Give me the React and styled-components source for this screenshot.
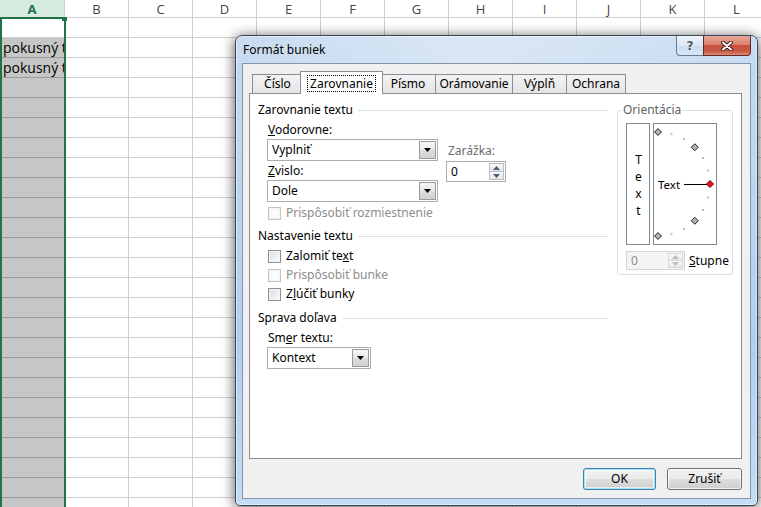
import React from "react"
import styled, { createGlobalStyle, css } from "styled-components"

const GlobalStyle = createGlobalStyle`
  html, body {
    margin: 0;
    padding: 0;
    background: #fff;
    overflow: hidden;
  }
  body {
    font-family: "Noto Sans", "Open Sans", sans-serif;
  }
`

const COLUMNS = ["A", "B", "C", "D", "E", "F", "G", "H", "I", "J", "K", "L"]
const ROW_COUNT = 25
const CELL_TEXT = { 2: "pokusný t", 3: "pokusný t" }

const TABS = [
  { label: "Číslo", w: 51 },
  { label: "Zarovnanie", w: 79, active: true },
  { label: "Písmo", w: 56 },
  { label: "Orámovanie", w: 78 },
  { label: "Výplň", w: 55 },
  { label: "Ochrana", w: 60 },
]

const DIAL_CENTER = { x: 4, y: 60 }
const DIAL_RADIUS = 52

export default function App() {
  return (
    <>
      <GlobalStyle />
      <Screen>
        <Sheet>
          {COLUMNS.map((c, i) => (
            <HeaderCell key={c} $active={i === 0}>
              {c}
            </HeaderCell>
          ))}
          {Array.from({ length: ROW_COUNT }, (_, r) =>
            COLUMNS.map((c, i) => (
              <Cell key={c + r} $selected={i === 0 && r > 0}>
                {i === 0 ? CELL_TEXT[r + 1] : null}
              </Cell>
            ))
          )}
        </Sheet>
        <SelectionFrame />
        <FillHandle />

        <Dialog>
          <TitleBar>
            <Title>Formát buniek</Title>
            <CaptionButtons>
              <HelpButton>?</HelpButton>
              <CloseButton>
                <svg width="12" height="10" viewBox="0 0 12 10">
                  <path d="M2 1.5l8 7M10 1.5l-8 7" stroke="#3a2020" strokeWidth="4" strokeLinecap="round" />
                  <path d="M2 1.5l8 7M10 1.5l-8 7" stroke="#fff" strokeWidth="2" strokeLinecap="round" />
                </svg>
              </CloseButton>
            </CaptionButtons>
          </TitleBar>

          <Client>
            <TabStrip>
              {TABS.map((t) => (
                <Tab key={t.label} $w={t.w} $active={t.active}>
                  {t.active ? <FocusRect>{t.label}</FocusRect> : t.label}
                </Tab>
              ))}
            </TabStrip>

            <Panel>
              <LeftColumn>
                <GroupHeading>Zarovnanie textu</GroupHeading>
                <AlignBlock>
                  <Stack $w={171}>
                    <FieldLabel>
                      <u>V</u>odorovne:
                    </FieldLabel>
                    <Select $w={171} $mt={1}>
                      <SelectValue>Vyplniť</SelectValue>
                      <DropButton>
                        <Arrow />
                      </DropButton>
                    </Select>
                    <FieldLabel $mt={2}>
                      <u>Z</u>vislo:
                    </FieldLabel>
                    <Select $w={171} $mt={1}>
                      <SelectValue>Dole</SelectValue>
                      <DropButton>
                        <Arrow />
                      </DropButton>
                    </Select>
                  </Stack>
                  <IndentStack>
                    <FieldLabel $disabled>Zarážka:</FieldLabel>
                    <Spin $w={60} $h={21} $mt={2} value="0" />
                  </IndentStack>
                </AlignBlock>
                <CheckRow $mt={3} $disabled>
                  <CheckBox $disabled />
                  Prispôsobiť rozmiestnenie
                </CheckRow>

                <GroupHeading $mt={7}>Nastavenie textu</GroupHeading>
                <CheckRow $mt={4}>
                  <CheckBox />
                  <span>
                    Zalomiť te<u>x</u>t
                  </span>
                </CheckRow>
                <CheckRow $mt={3} $disabled>
                  <CheckBox $disabled />
                  Prispôsobiť bunke
                </CheckRow>
                <CheckRow $mt={3}>
                  <CheckBox />
                  <span>
                    Z<u>l</u>účiť bunky
                  </span>
                </CheckRow>

                <GroupHeading $mt={8}>Sprava doľava</GroupHeading>
                <FieldLabel $mt={4} $indent>
                  Sm<u>e</u>r textu:
                </FieldLabel>
                <Select $w={104} $mt={1} $indent>
                  <SelectValue>Kontext</SelectValue>
                  <DropButton>
                    <Arrow />
                  </DropButton>
                </Select>
              </LeftColumn>

              <OrientGroup>
                <Legend>Orientácia</Legend>
                <OrientRow>
                  <VerticalBox>
                    <VerticalText>Text</VerticalText>
                  </VerticalBox>
                  <DialBox>
                    <Dial />
                  </DialBox>
                </OrientRow>
                <DegreeRow>
                  <Spin $w={59} $h={19} value="0" disabled />
                  <span>
                    <u>S</u>tupne
                  </span>
                </DegreeRow>
              </OrientGroup>
            </Panel>

            <ButtonRow>
              <PushButton $w={73} $default>
                OK
              </PushButton>
              <PushButton $w={75}>Zrušiť</PushButton>
            </ButtonRow>
          </Client>
        </Dialog>
      </Screen>
    </>
  )
}

const Arrow = () => (
  <svg width="7" height="4" viewBox="0 0 7 4">
    <path d="M0 0h7L3.5 4z" fill="#000" />
  </svg>
)

const Spin = ({ $w, $h, $mt, value, disabled }) => (
  <SpinBox $w={$w} $h={$h} $mt={$mt} $disabled={disabled}>
    <SpinValue $disabled={disabled}>{value}</SpinValue>
    <SpinButtons>
      <SpinHalf $disabled={disabled}>
        <svg width="7" height="4" viewBox="0 0 7 4">
          <path d="M0 4L3.5 0L7 4z" fill={disabled ? "#b8bcc4" : "#4d5d7a"} />
        </svg>
      </SpinHalf>
      <SpinHalf $disabled={disabled}>
        <svg width="7" height="4" viewBox="0 0 7 4">
          <path d="M0 0h7L3.5 4z" fill={disabled ? "#b8bcc4" : "#4d5d7a"} />
        </svg>
      </SpinHalf>
    </SpinButtons>
  </SpinBox>
)

const Diamond = ({ x, y, red }) => (
  <path
    d={`M${x} ${y - 3.5}L${x + 3.5} ${y}L${x} ${y + 3.5}L${x - 3.5} ${y}Z`}
    fill={red ? "#e8101c" : "#b4b4b4"}
    stroke={red ? "#6a0000" : "#222"}
    strokeWidth="1"
  />
)

const Dial = () => {
  const marks = []
  for (let a = 90; a >= -90; a -= 15) {
    const rad = (a * Math.PI) / 180
    const x = DIAL_CENTER.x + DIAL_RADIUS * Math.cos(rad)
    const y = DIAL_CENTER.y - DIAL_RADIUS * Math.sin(rad)
    if (a % 45 === 0) marks.push(<Diamond key={a} x={x} y={y} red={a === 0} />)
    else marks.push(<rect key={a} x={x - 1} y={y - 1} width="2" height="2" fill="#bdbdbd" />)
  }
  return (
    <svg width="62" height="120" viewBox="0 0 62 120">
      {marks}
      <text x="4" y="64.5" fontSize="11.5" fontFamily="Noto Sans, Open Sans, sans-serif" fill="#000">
        Text
      </text>
      <line x1="30" y1="60.5" x2="53" y2="60.5" stroke="#000" strokeWidth="1" />
    </svg>
  )
}

/* ---------- sheet ---------- */

const Screen = styled.div`
  position: relative;
  width: 761px;
  height: 507px;
  overflow: hidden;
  background: #fff;
`

const Sheet = styled.div`
  display: grid;
  grid-template-columns: 64px repeat(11, 63px);
  grid-template-rows: 17px;
  grid-auto-rows: 19px;
  gap: 1px;
  width: 769px;
  background-color: #cfcfcf;
`

const HeaderCell = styled.div`
  display: flex;
  align-items: center;
  justify-content: center;
  font: 13px "Open Sans", sans-serif;
  color: #444;
  background: #fff;

  ${(p) =>
    p.$active &&
    css`
      background: #d6ece0;
      color: #217346;
      font-weight: 700;
    `}
`

const Cell = styled.div`
  background: ${(p) => (p.$selected ? "#c6c6c6" : "#fff")};
  box-shadow: ${(p) => (p.$selected ? "0 1px 0 #9b9b9b" : "none")};
  padding-left: 3px;
  font: 14px/19px "Open Sans", sans-serif;
  color: #000;
  white-space: nowrap;
  overflow: hidden;
`

const SelectionFrame = styled.div`
  position: absolute;
  left: 0;
  top: 17px;
  width: 66px;
  height: 500px;
  box-sizing: border-box;
  border: 2px solid #217346;
  pointer-events: none;
`

const FillHandle = styled.div`
  position: absolute;
  left: 62px;
  top: 17px;
  width: 5px;
  height: 4px;
  background: #217346;
`

/* ---------- dialog frame ---------- */

const Dialog = styled.div`
  position: absolute;
  left: 235px;
  top: 35px;
  width: 523px;
  height: 471px;
  box-sizing: border-box;
  display: flex;
  flex-direction: column;
  padding: 0 6px 6px;
  border: 1px solid #3a4756;
  border-radius: 7px 7px 5px 5px;
  background: linear-gradient(180deg, #c6daf0 0%, #bcd5f0 35%, #aecff3 65%, #c4dcf4 100%);
  box-shadow: inset 0 0 0 1px rgba(255, 255, 255, 0.45), 0 2px 14px rgba(0, 0, 0, 0.7);
  font: 12px/16px "Noto Sans", "Open Sans", sans-serif;
  color: #000;
`

const TitleBar = styled.div`
  height: 27px;
  display: flex;
  align-items: flex-start;
  margin: 0 -6px;
  padding: 0 6px 0 7px;
  border-radius: 6px 6px 0 0;
  background: linear-gradient(
    90deg,
    rgba(255, 255, 255, 0.05) 0%,
    rgba(255, 255, 255, 0.35) 45%,
    rgba(255, 255, 255, 0.25) 70%,
    rgba(255, 255, 255, 0.05) 100%
  );
`

const Title = styled.div`
  flex: 1;
  padding-top: 6px;
`

const CaptionButtons = styled.div`
  display: flex;
  height: 20px;
`

const HelpButton = styled.div`
  width: 27px;
  box-sizing: border-box;
  border: 1px solid #6c7c8e;
  border-top: none;
  border-right: none;
  border-radius: 0 0 0 4px;
  background: linear-gradient(180deg, #eef4fa 0%, #dbe7f3 50%, #c8dbee 51%, #d6e6f5 100%);
  display: flex;
  align-items: center;
  justify-content: center;
  font: bold 12px "DejaVu Sans", sans-serif;
  color: #4a5666;
  text-shadow: 0 0 2px #fff;
`

const CloseButton = styled.div`
  width: 48px;
  box-sizing: border-box;
  border: 1px solid #5e2a2a;
  border-top: none;
  border-radius: 0 0 4px 0;
  background: linear-gradient(180deg, #e6a798 0%, #d9826f 45%, #c7503e 50%, #c95a45 80%, #dd8a70 100%);
  display: flex;
  align-items: center;
  justify-content: center;
`

const Client = styled.div`
  flex: 1;
  display: flex;
  flex-direction: column;
  border: 1px solid #8595a9;
  background: #f0f0f0;
  padding: 7px 8px 8px 6px;
`

/* ---------- tabs ---------- */

const TabStrip = styled.div`
  display: flex;
  align-items: flex-end;
  height: 23px;
  padding-left: 3px;
  margin-bottom: -1px;
  position: relative;
  z-index: 1;
`

const Tab = styled.div`
  box-sizing: border-box;
  width: ${(p) => p.$w}px;
  height: 19px;
  margin: 0 0 1px -1px;
  border: 1px solid #898c95;
  border-bottom: none;
  background: linear-gradient(180deg, #f3f3f3, #e5e5e5);
  display: flex;
  align-items: center;
  justify-content: center;

  &:first-child {
    margin-left: 0;
  }

  ${(p) =>
    p.$active &&
    css`
      width: ${p.$w + 4}px;
      height: 23px;
      margin: 0 -2px 0 -3px;
      background: #fff;
      position: relative;
      z-index: 1;
    `}
`

const FocusRect = styled.span`
  outline: 1px dotted #000;
  padding: 0 2px;
  line-height: 15px;
`

const Panel = styled.div`
  flex: 1;
  display: flex;
  gap: 9px;
  padding: 8px 8px 0;
  background: #fff;
  border: 1px solid #898c95;
`

const ButtonRow = styled.div`
  display: flex;
  justify-content: flex-end;
  gap: 11px;
  margin-top: 9px;
`

const PushButton = styled.div`
  box-sizing: border-box;
  width: ${(p) => p.$w}px;
  height: 22px;
  border: 1px solid #707070;
  border-radius: 3px;
  background: linear-gradient(180deg, #f2f2f2 0%, #ebebeb 50%, #dddddd 51%, #cfcfcf 100%);
  box-shadow: inset 0 0 0 1px rgba(255, 255, 255, 0.7);
  display: flex;
  align-items: center;
  justify-content: center;

  ${(p) =>
    p.$default &&
    css`
      border-color: #3c7fb1;
      box-shadow: inset 0 0 0 1px #a5e4fb, inset 0 0 0 2px rgba(255, 255, 255, 0.6);
    `}
`

/* ---------- left column ---------- */

const LeftColumn = styled.div`
  width: 350px;
  display: flex;
  flex-direction: column;
`

const GroupHeading = styled.div`
  display: flex;
  align-items: center;
  gap: 5px;
  white-space: nowrap;
  margin-top: ${(p) => p.$mt || 0}px;

  &::after {
    content: "";
    flex: 1;
    height: 1px;
    background: #dce2e8;
  }
`

const AlignBlock = styled.div`
  display: flex;
  gap: 8px;
  margin-top: 4px;
  padding-left: 9px;
`

const Stack = styled.div`
  display: flex;
  flex-direction: column;
  width: ${(p) => p.$w}px;
`

const IndentStack = styled.div`
  display: flex;
  flex-direction: column;
  padding-top: 21px;
`

const FieldLabel = styled.div`
  margin-top: ${(p) => p.$mt || 0}px;
  padding-left: ${(p) => (p.$indent ? 10 : p.$disabled ? 2 : 1)}px;
  color: ${(p) => (p.$disabled ? "#6d6d6d" : "#000")};
`

const Select = styled.div`
  box-sizing: border-box;
  width: ${(p) => p.$w}px;
  height: 22px;
  margin-top: ${(p) => p.$mt || 0}px;
  margin-left: ${(p) => (p.$indent ? 9 : 0)}px;
  padding: 1px 1px 1px 4px;
  border: 1px solid #abadb3;
  background: #fff;
  display: flex;
  align-items: center;
`

const SelectValue = styled.span`
  flex: 1;
`

const DropButton = styled.span`
  align-self: stretch;
  width: 17px;
  box-sizing: border-box;
  border: 1px solid #9a9a9a;
  background: linear-gradient(180deg, #f6f6f6 0%, #e8e8e8 50%, #dcdcdc 51%, #d2d2d2 100%);
  display: flex;
  align-items: center;
  justify-content: center;
`

const SpinBox = styled.div`
  box-sizing: border-box;
  width: ${(p) => p.$w}px;
  height: ${(p) => p.$h}px;
  margin-top: ${(p) => p.$mt || 0}px;
  padding: 1px;
  border: 1px solid ${(p) => (p.$disabled ? "#d5d5d5" : "#abadb3")};
  background: ${(p) => (p.$disabled ? "#f4f4f4" : "#fff")};
  display: flex;
`

const SpinValue = styled.span`
  flex: 1;
  padding-left: 3px;
  display: flex;
  align-items: center;
  color: ${(p) => (p.$disabled ? "#8d8d8d" : "#000")};
`

const SpinButtons = styled.span`
  width: 15px;
  display: flex;
  flex-direction: column;
`

const SpinHalf = styled.span`
  flex: 1;
  box-sizing: border-box;
  border: 1px solid ${(p) => (p.$disabled ? "#dadada" : "#b9bcc2")};
  background: linear-gradient(180deg, #fafafa, #e6e6e6);
  display: flex;
  align-items: center;
  justify-content: center;

  & + & {
    border-top: none;
  }
`

const CheckRow = styled.div`
  display: flex;
  align-items: center;
  gap: 5px;
  height: 16px;
  margin-top: ${(p) => p.$mt || 0}px;
  padding-left: 10px;
  color: ${(p) => (p.$disabled ? "#8d8d8d" : "#000")};
`

const CheckBox = styled.span`
  width: 13px;
  height: 13px;
  box-sizing: border-box;
  border: 1px solid ${(p) => (p.$disabled ? "#c4c4c4" : "#8e8f8f")};
  background: ${(p) =>
    p.$disabled ? "#fbfbfb" : "linear-gradient(135deg, #dcdcdc 0%, #f0f0f0 60%, #fdfdfd 100%)"};
  box-shadow: inset 0 0 0 1px #f4f4f4;
`

/* ---------- orientation ---------- */

const OrientGroup = styled.fieldset`
  align-self: flex-start;
  box-sizing: border-box;
  width: 116px;
  min-width: 0;
  margin: 0;
  padding: 5px 0 4px 8px;
  border: 1px solid #d5dfe5;
  border-radius: 3px;
`

const Legend = styled.legend`
  margin-left: -4px;
  padding: 0 1px;
  color: #5f5f5f;
  line-height: 16px;
`

const OrientRow = styled.div`
  display: flex;
  gap: 3px;
`

const VerticalBox = styled.div`
  box-sizing: border-box;
  width: 24px;
  height: 122px;
  border: 1px solid #828790;
  display: flex;
  align-items: center;
  justify-content: center;
  padding-top: 2px;
`

const VerticalText = styled.span`
  writing-mode: vertical-lr;
  text-orientation: upright;
  font-size: 12px;
  line-height: 16px;
`

const DialBox = styled.div`
  box-sizing: border-box;
  width: 64px;
  height: 122px;
  border: 1px solid #828790;
`

const DegreeRow = styled.div`
  display: flex;
  align-items: center;
  gap: 4px;
  margin-top: 6px;
`
